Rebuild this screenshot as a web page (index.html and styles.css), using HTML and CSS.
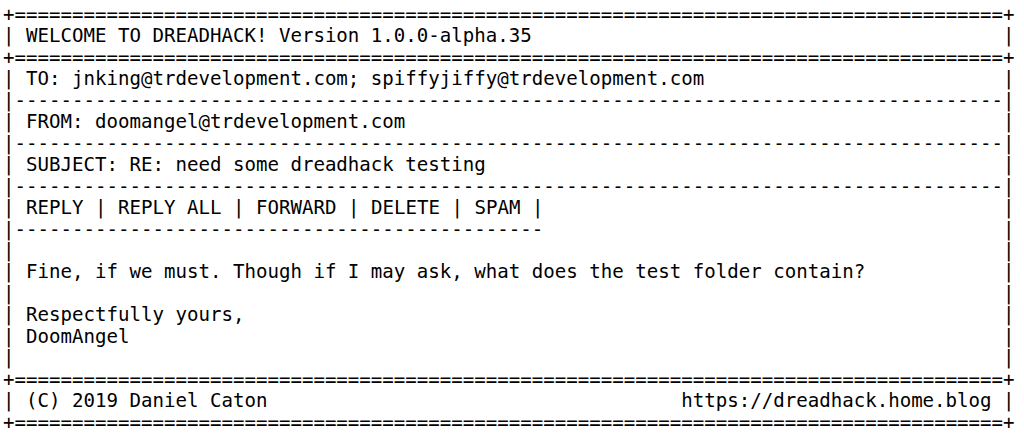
FILE: index.html
```html
<!DOCTYPE html>
<html lang="en">
<head>
<meta charset="utf-8">
<title>DreadHack</title>
<link rel="stylesheet" href="styles.css">
</head>
<body>
<div class="term">
  <div class="row"><span>+</span><span class="fill">======================================================================================</span><span>+</span></div>
  <div class="row"><span>|</span><span class="cell"> WELCOME TO DREADHACK! Version 1.0.0-alpha.35</span><span>|</span></div>
  <div class="row"><span>+</span><span class="fill">======================================================================================</span><span>+</span></div>
  <div class="row"><span>|</span><span class="cell"> TO: jnking@trdevelopment.com; spiffyjiffy@trdevelopment.com</span><span>|</span></div>
  <div class="row"><span>|</span><span class="fill">--------------------------------------------------------------------------------------</span><span>|</span></div>
  <div class="row"><span>|</span><span class="cell"> FROM: doomangel@trdevelopment.com</span><span>|</span></div>
  <div class="row"><span>|</span><span class="fill">--------------------------------------------------------------------------------------</span><span>|</span></div>
  <div class="row"><span>|</span><span class="cell"> SUBJECT: RE: need some dreadhack testing</span><span>|</span></div>
  <div class="row"><span>|</span><span class="fill">--------------------------------------------------------------------------------------</span><span>|</span></div>
  <div class="row"><span>|</span><span class="cell"> <span class="act">REPLY</span> | <span class="act">REPLY ALL</span> | <span class="act">FORWARD</span> | <span class="act">DELETE</span> | <span class="act">SPAM</span> |</span><span>|</span></div>
  <div class="row"><span>|</span><span class="cell"><span class="underbar">----------------------------------------------</span></span><span>|</span></div>
  <div class="row"><span>|</span><span class="cell"></span><span>|</span></div>
  <div class="row"><span>|</span><span class="cell"> Fine, if we must. Though if I may ask, what does the test folder contain?</span><span>|</span></div>
  <div class="row"><span>|</span><span class="cell"></span><span>|</span></div>
  <div class="row"><span>|</span><span class="cell"> Respectfully yours,</span><span>|</span></div>
  <div class="row"><span>|</span><span class="cell"> DoomAngel</span><span>|</span></div>
  <div class="row"><span>|</span><span class="cell"></span><span>|</span></div>
  <div class="row"><span>+</span><span class="fill">======================================================================================</span><span>+</span></div>
  <div class="row"><span>|</span><span class="cell split"><span> (C) 2019 Daniel Caton</span><span>https://dreadhack.home.blog </span></span><span>|</span></div>
  <div class="row"><span>+</span><span class="fill">======================================================================================</span><span>+</span></div>
</div>
</body>
</html>
```

FILE: styles.css
```css
html, body {
  margin: 0;
  padding: 0;
  background: #ffffff;
}

body {
  padding: 4px 3px 0;
}

.term {
  width: 88ch;
  font-family: "DejaVu Sans Mono", "Liberation Mono", monospace;
  font-size: 19.1px;
  line-height: 21.45px;
  color: #000000;
}

.row {
  display: flex;
  white-space: pre;
}

.fill,
.cell {
  flex: 1;
  min-width: 0;
}

.split {
  display: flex;
  justify-content: space-between;
}

.underbar {
  display: block;
}

.act {
  color: inherit;
}
```
